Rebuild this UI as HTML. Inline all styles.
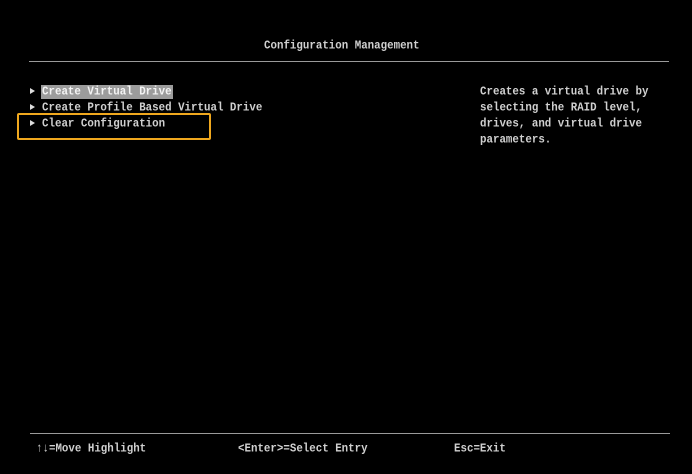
<html><head><style>
body{margin:0;width:692px;height:474px;background:#000;overflow:hidden;position:relative;font-family:"Liberation Mono",monospace;font-size:10.8px;color:#d0d0d0;font-weight:bold;}
.t{position:absolute;white-space:pre;line-height:14px;transform:scaleY(1.15);transform-origin:0 50%;}
.hl{position:absolute;height:1px;background:#9a9a9a;}
.tri{position:absolute;width:0;height:0;border-left:5px solid #ddd;border-top:3.5px solid transparent;border-bottom:3.5px solid transparent;}
</style></head><body>
<div class="t" style="left:264px;top:39px">Configuration Management</div>
<div class="hl" style="left:29px;top:61px;width:640px"></div>
<div style="position:absolute;left:41px;top:85px;width:132px;height:14px;background:#9c9c9c"></div>
<div class="tri" style="left:30px;top:88px"></div>
<div class="tri" style="left:30px;top:104px"></div>
<div class="tri" style="left:30px;top:120px"></div>
<div class="t" style="left:42px;top:85px;color:#f4f4f4">Create Virtual Drive</div>
<div class="t" style="left:42px;top:101px">Create Profile Based Virtual Drive</div>
<div class="t" style="left:42px;top:117px">Clear Configuration</div>
<div style="position:absolute;left:17px;top:113px;width:190px;height:23px;border:2px solid #f0a81e;border-radius:2px"></div>
<div class="t" style="left:480px;top:85px">Creates a virtual drive by</div>
<div class="t" style="left:480px;top:101px">selecting the RAID level,</div>
<div class="t" style="left:480px;top:117px">drives, and virtual drive</div>
<div class="t" style="left:480px;top:133px">parameters.</div>
<div class="hl" style="left:30px;top:433px;width:640px"></div>
<div class="t" style="left:36px;top:442px">↑↓=Move Highlight</div>
<div class="t" style="left:238px;top:442px">&lt;Enter&gt;=Select Entry</div>
<div class="t" style="left:454px;top:442px">Esc=Exit</div>
</body></html>
